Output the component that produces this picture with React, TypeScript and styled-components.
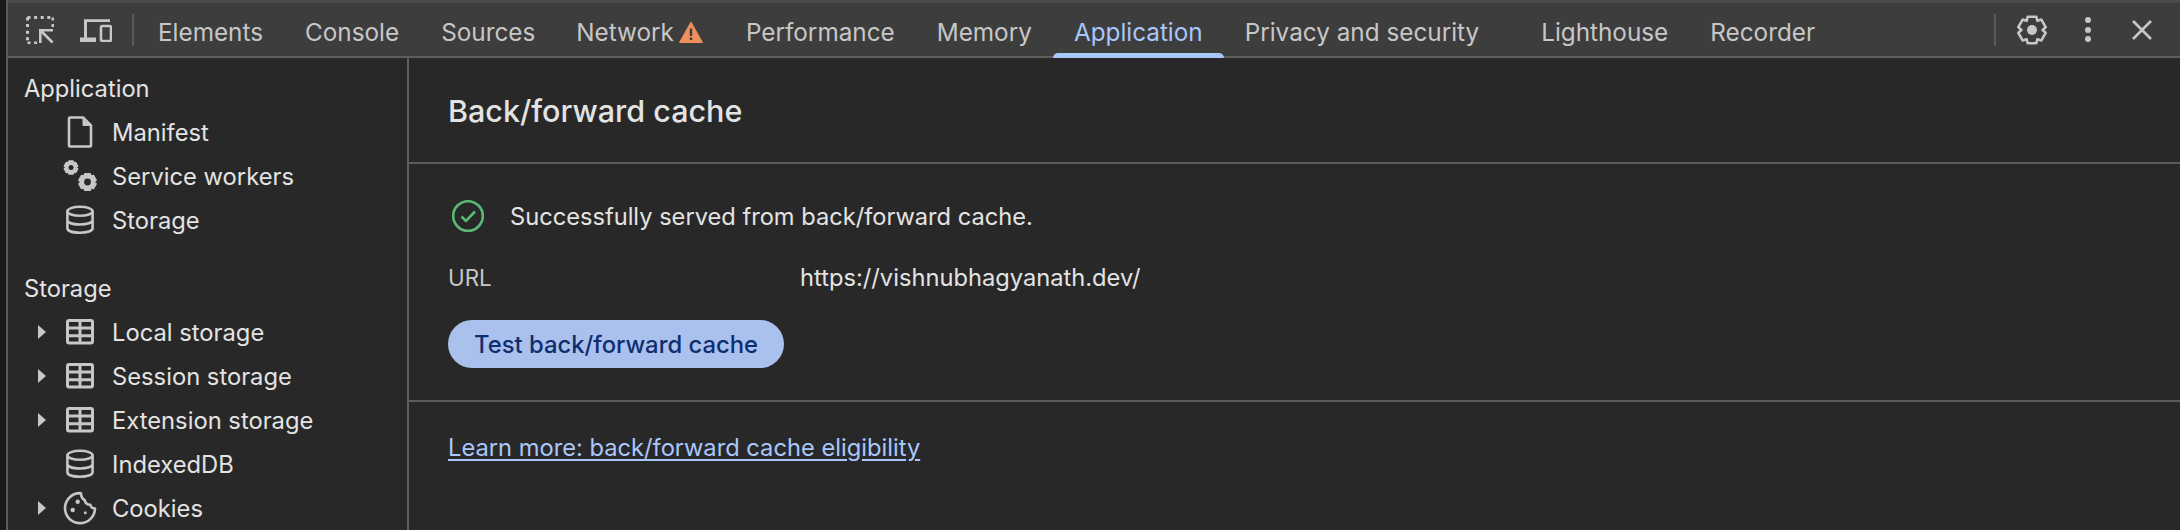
import React from "react";
import styled, { createGlobalStyle } from "styled-components";

const Global = createGlobalStyle`
  html, body { margin: 0; padding: 0; background: #1d1d1d; overflow: hidden; }
  body { font-family: Inter, "Liberation Sans", sans-serif; -webkit-font-smoothing: antialiased; }
  #root { width: 2180px; height: 530px; }
`;

const Frame = styled.div`
  width: 2180px; height: 530px; display: flex; background: #1a1a1a; overflow: hidden;
  padding-left: 6px; box-sizing: border-box;
`;
const Devtools = styled.div`
  flex: 1; display: flex; flex-direction: column; border-left: 2px solid #5c5c5c; min-width: 0;
`;
const Toolbar = styled.div`
  height: 53px; margin-top: 3px; background: #3d3d3d; border-bottom: 2px solid #5e5e5e;
  box-shadow: 0 -3px 0 #4a4a4a; display: flex; align-items: center; padding: 0 26px 0 18px;
  flex-shrink: 0;
`;
const ToolIcon = styled.svg<{ $ml?: number }>`
  display: block; flex-shrink: 0; margin-left: ${p => p.$ml ?? 0}px; color: #c7c7c7;
`;
const Sep = styled.div<{ $ml: number }>`
  width: 2px; height: 32px; background: #5a5a5a; margin-left: ${p => p.$ml}px; flex-shrink: 0;
`;
const Tabs = styled.div`
  display: flex; align-self: stretch; margin-left: 3px; flex: 1;
`;
const Tab = styled.div<{ $active?: boolean; $mr?: number }>`
  position: relative; display: flex; align-items: center; gap: 5px;
  padding: 4px 21px 0; margin-right: ${p => p.$mr ?? 0}px;
  font-size: 24.3px; font-weight: 400; white-space: nowrap;
  color: ${p => (p.$active ? "#a8c7fa" : "#c7c7c7")};
`;
const NetworkLabel = styled.span`
  margin-left: -1px;
`;
const WarnIcon = styled.svg`
  display: block; flex-shrink: 0; margin-right: 1px;
`;
const TabMark = styled.span`
  position: absolute; left: 0; right: 0; bottom: -2px; height: 5px;
  background: #a8c7fa; border-radius: 5px 5px 0 0;
`;
const Body = styled.div`
  flex: 1; display: flex; min-height: 0;
`;
const Sidebar = styled.div`
  width: 399px; flex-shrink: 0; background: #282828; border-right: 2px solid #5c5c5c;
  padding-top: 8px; overflow: hidden;
`;
const Section = styled.div<{ $mt?: number }>`
  margin-top: ${p => p.$mt ?? 0}px;
`;
const SectionTitle = styled.div`
  height: 44px; display: flex; align-items: center; padding-left: 16px;
  font-size: 23.7px; color: #e3e3e3;
`;
const Row = styled.div`
  height: 44px; display: flex; align-items: center; padding-left: 30px;
  font-size: 23.75px; color: #e3e3e3; white-space: nowrap;
`;
const Arrow = styled.div<{ $open?: boolean }>`
  width: 0; height: 0; flex-shrink: 0; margin-right: 16px;
  border-left: 8px solid ${p => (p.$open ? "#c7c7c7" : "transparent")};
  border-top: 7.5px solid transparent; border-bottom: 7.5px solid transparent;
`;
const RowIcon = styled.svg`
  display: block; width: 36px; height: 36px; flex-shrink: 0; margin-right: 14px; color: #c7c7c7;
`;
const Main = styled.div`
  flex: 1; background: #282828; min-width: 0;
`;
const Header = styled.div`
  height: 106px; box-sizing: border-box; border-bottom: 2px solid #5c5c5c;
  display: flex; align-items: center; padding: 0 0 0 39px;
  font-size: 30.5px; font-weight: 500; color: #e3e3e3;
`;
const Report = styled.div`
  height: 238px; box-sizing: border-box; border-bottom: 2px solid #5c5c5c;
  padding: 28px 0 0 39px;
`;
const Status = styled.div`
  height: 48px; display: flex; align-items: center; padding-left: 3px;
  font-size: 23.65px; color: #e3e3e3;
`;
const StatusIcon = styled.svg`
  display: block; width: 34px; height: 34px; flex-shrink: 0; margin-right: 25px;
`;
const Field = styled.div`
  display: flex; align-items: center; height: 46px; margin-top: 14px; font-size: 23.7px;
`;
const FieldLabel = styled.div`
  width: 352px; color: #c7c7c7; font-size: 22.4px;
`;
const FieldValue = styled.div`
  color: #e3e3e3;
`;
const Button = styled.button`
  display: block; box-sizing: border-box; width: 336px; height: 48px; margin: 20px 0 0;
  border: none; border-radius: 24px; background: #a9c1ec; color: #0f2e70;
  font: 500 23.8px Inter, "Liberation Sans", sans-serif; padding: 0;
`;
const Footer = styled.div`
  padding: 31px 0 0 39px;
`;
const LearnLink = styled.a`
  font-size: 23.7px; color: #a8c7fa; text-decoration: underline; text-underline-offset: 3px;
`;

const Table = () => (
  <RowIcon viewBox="0 0 36 36" fill="none" stroke="currentColor" strokeWidth="3">
    <rect x="5.500" y="6.500" width="25" height="22.500" rx="1.500" />
    <path d="M5 14h26M5 21.800h26M18 6v23" />
  </RowIcon>
);
const Db = () => (
  <RowIcon viewBox="0 0 36 36" fill="none" stroke="currentColor" strokeWidth="2.6">
    <ellipse cx="18" cy="9.300" rx="12.6" ry="4.500" />
    <path d="M5.400 9.300v17c0 2.800 5.600 4.500 12.600 4.500s12.600-1.700 12.600-4.500v-17M5.400 18c0 2.800 5.600 4.500 12.600 4.500s12.600-1.700 12.600-4.500" />
  </RowIcon>
);
const gearPath = (cx: number, cy: number, r: number) => {
  const pts: string[] = [];
  for (let i = 0; i < 6; i++) {
    const a = (i * Math.PI) / 3 + Math.PI / 2;
    const b = a + Math.PI / 10;
    const c = a - Math.PI / 10;
    pts.push(`${(cx + r * Math.cos(c)).toFixed(2)},${(cy + r * Math.sin(c)).toFixed(2)}`);
    pts.push(`${(cx + r * Math.cos(b)).toFixed(2)},${(cy + r * Math.sin(b)).toFixed(2)}`);
    const d = a + Math.PI / 6;
    pts.push(`${(cx + r * 0.76 * Math.cos(d)).toFixed(2)},${(cy + r * 0.76 * Math.sin(d)).toFixed(2)}`);
  }
  return "M" + pts.join("L") + "Z";
};

const App = () => (
  <Frame>
    <Global />
    <Devtools>
      <Toolbar>
        <ToolIcon width="28" height="28" viewBox="0 0 28 28" fill="none">
          <path d="M1.5 1.5H27M1.5 1.5V27M1.5 27H12M27 1.5V12" stroke="#c7c7c7" strokeWidth="3" strokeDasharray="3 3.6" />
          <path d="M13 27V13H27V15.6H17.5L27.5 25.6L25.6 27.5L15.6 17.5V27Z" fill="#c7c7c7" />
        </ToolIcon>
        <ToolIcon $ml={26} width="32" height="24" viewBox="0 0 32 24" fill="none">
          <path d="M0 24V19.6H4V1.3H30V4H7V19.6H16V24Z" fill="#c7c7c7" />
          <rect x="21" y="8" width="10" height="15" rx="1.5" stroke="#c7c7c7" strokeWidth="2.6" />
        </ToolIcon>
        <Sep $ml={20} />
        <Tabs>
          <Tab>Elements</Tab>
          <Tab>Console</Tab>
          <Tab>Sources</Tab>
          <Tab>
            <NetworkLabel>Network</NetworkLabel>
            <WarnIcon width="24" height="22" viewBox="0 0 24 22">
              <path d="M12 1L23.5 21.5H.5Z" fill="#ee8f60" stroke="#ee8f60" strokeLinejoin="round" />
              <path d="M10.8 7.5h2.4v7.5h-2.4zM10.8 16.5h2.4v2.4h-2.4z" fill="#3d3d3d" />
            </WarnIcon>
          </Tab>
          <Tab>Performance</Tab>
          <Tab>Memory</Tab>
          <Tab $active>
            Application
            <TabMark />
          </Tab>
          <Tab $mr={20}>Privacy and security</Tab>
          <Tab>Lighthouse</Tab>
          <Tab>Recorder</Tab>
        </Tabs>
        <Sep $ml={0} />
        <ToolIcon $ml={20} width="32" height="32" viewBox="0 0 32 32" fill="none">
          <path d={gearPath(16, 16, 14)} stroke="#c7c7c7" strokeWidth="2.6" strokeLinejoin="round" />
          <circle cx="16" cy="16" r="5" fill="#c7c7c7" />
        </ToolIcon>
        <ToolIcon $ml={32} width="16" height="32" viewBox="0 0 16 32" fill="#c7c7c7">
          <circle cx="8" cy="6" r="3" />
          <circle cx="8" cy="16" r="3" />
          <circle cx="8" cy="25" r="3" />
        </ToolIcon>
        <ToolIcon $ml={34} width="24" height="24" viewBox="0 0 24 24" fill="none" stroke="#c7c7c7" strokeWidth="2.6">
          <path d="M3 3L21 21M21 3L3 21" />
        </ToolIcon>
      </Toolbar>
      <Body>
        <Sidebar>
          <Section>
            <SectionTitle>Application</SectionTitle>
            <Row>
              <Arrow />
              <RowIcon viewBox="0 0 36 36" fill="none" stroke="currentColor" strokeWidth="2.6" strokeLinejoin="round">
                <path d="M8 3.500H21L29 11.500V31.500a1 1 0 0 1-1 1H8a1 1 0 0 1-1-1V4.500a1 1 0 0 1 1-1Z" />
                <path d="M21 3.500V11.500H29L21 3.500Z" fill="currentColor" strokeWidth="1" />
              </RowIcon>
              Manifest
            </Row>
            <Row>
              <Arrow />
              <RowIcon viewBox="0 0 36 36" fill="none">
                <path d={gearPath(9, 9.500, 6.800)} fill="currentColor" stroke="currentColor" strokeWidth="1.500" strokeLinejoin="round" />
                <circle cx="9" cy="9.500" r="2.500" fill="#282828" />
                <path d={gearPath(25.500, 24, 8.800)} fill="currentColor" stroke="currentColor" strokeWidth="1.500" strokeLinejoin="round" />
                <circle cx="25.500" cy="24" r="3.400" fill="#282828" />
              </RowIcon>
              Service workers
            </Row>
            <Row>
              <Arrow />
              <Db />
              Storage
            </Row>
          </Section>
          <Section $mt={24}>
            <SectionTitle>Storage</SectionTitle>
            <Row>
              <Arrow $open />
              <Table />
              Local storage
            </Row>
            <Row>
              <Arrow $open />
              <Table />
              Session storage
            </Row>
            <Row>
              <Arrow $open />
              <Table />
              Extension storage
            </Row>
            <Row>
              <Arrow />
              <Db />
              IndexedDB
            </Row>
            <Row>
              <Arrow $open />
              <RowIcon viewBox="0 0 36 36" fill="none">
                <path d="M19 3.200A15 15 0 1 0 33 18.500C30.500 18.500 28.800 17 28.300 14.800 25.300 14.800 23 12.800 22.800 10.200 20.500 9 19 6.500 19 3.200Z" stroke="currentColor" strokeWidth="2.6" strokeLinejoin="round" />
                <circle cx="15.700" cy="11.700" r="2.200" fill="currentColor" />
                <circle cx="10.700" cy="20" r="2.200" fill="currentColor" />
                <circle cx="23.300" cy="22.700" r="1.500" fill="currentColor" />
              </RowIcon>
              Cookies
            </Row>
          </Section>
        </Sidebar>
        <Main>
          <Header>Back/forward cache</Header>
          <Report>
            <Status>
              <StatusIcon viewBox="0 0 34 34" fill="none">
                <circle cx="17" cy="17" r="14.800" stroke="#5bb974" strokeWidth="2.600" />
                <path d="M10.500 17.500L15 22L24 12.500" stroke="#5bb974" strokeWidth="2.600" />
              </StatusIcon>
              Successfully served from back/forward cache.
            </Status>
            <Field>
              <FieldLabel>URL</FieldLabel>
              <FieldValue>https://vishnubhagyanath.dev/</FieldValue>
            </Field>
            <Button>Test back/forward cache</Button>
          </Report>
          <Footer>
            <LearnLink>Learn more: back/forward cache eligibility</LearnLink>
          </Footer>
        </Main>
      </Body>
    </Devtools>
  </Frame>
);

export default App;
